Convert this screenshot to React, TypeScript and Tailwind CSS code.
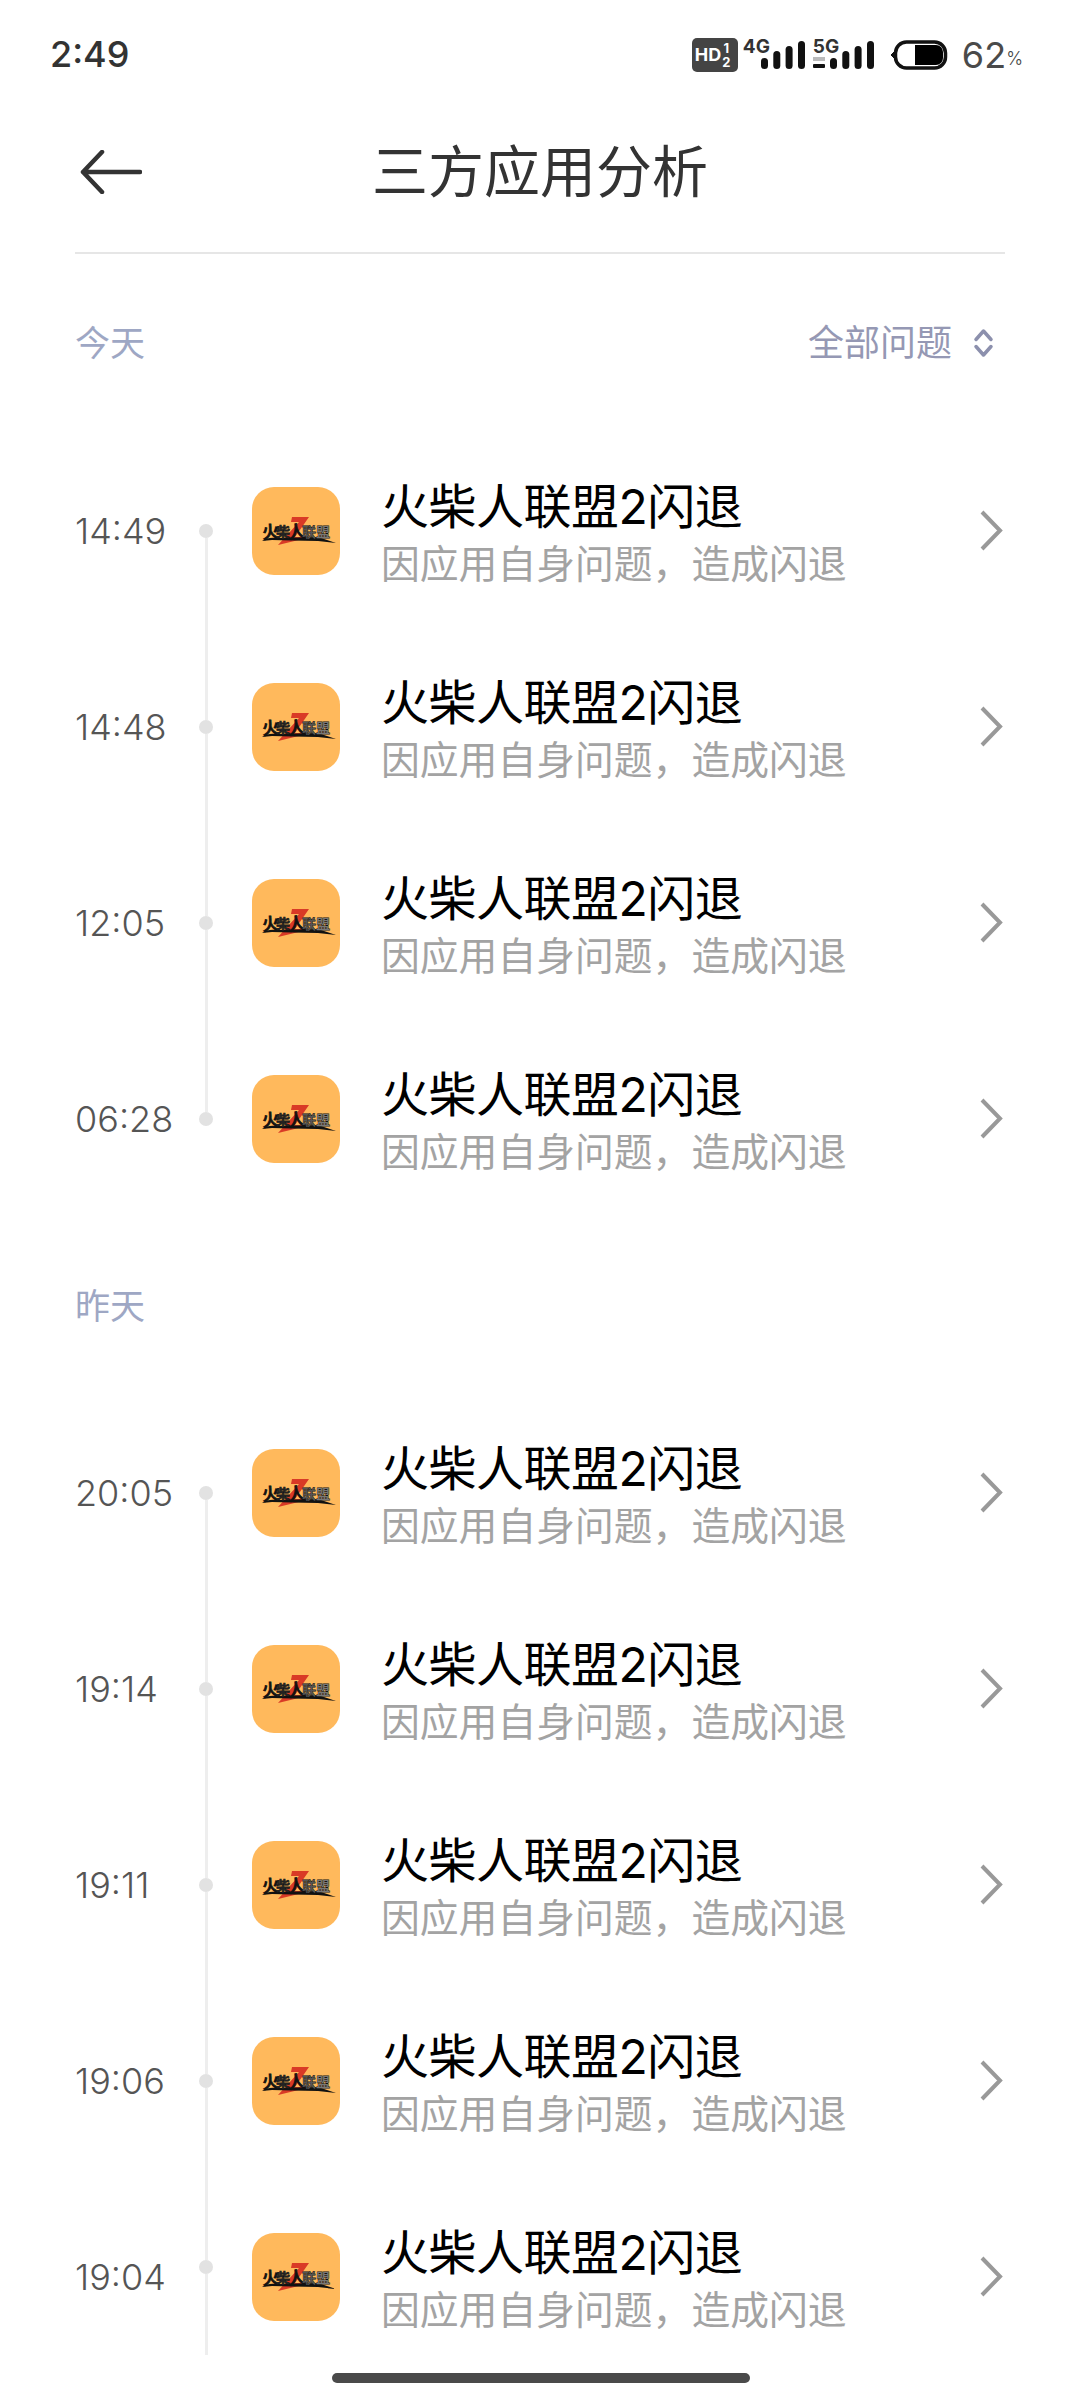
const CJK = "font-['Inter','Noto_Sans_CJK_SC',sans-serif]";

function Bars({ x }: { x: number }) {
  const bars = [
    [0, 11],
    [12.3, 18],
    [24.6, 23],
    [37, 28],
  ];
  return (
    <>
      {bars.map(([dx, h]) => (
        <rect key={dx} x={x + dx} y={31 - h} width={7} height={h} rx={3.5} fill="#111" />
      ))}
    </>
  );
}

function StatusIcons() {
  return (
    <div className="flex items-center">
      <div className="flex h-[34px] w-[46px] items-center rounded-[5px] bg-[#444] pl-[3px] text-[18px] font-bold leading-none text-white">
        <span>HD</span>
        <span className="ml-[1px] flex flex-col items-center text-[13px] leading-[14px]">
          <span>1</span>
          <span>2</span>
        </span>
      </div>
      <div className="relative ml-[5px] h-[34px] w-[140px]">
        <span className="absolute left-0 top-[-1px] text-[19px] font-bold leading-[20px] text-[#333]">4G</span>
        <span className="absolute left-[70px] top-[-1px] text-[19px] font-bold leading-[20px] text-[#333]">5G</span>
        <svg width="140" height="34" viewBox="0 0 140 34" className="block">
          <Bars x={18} />
          <rect x="70" y="19" width="12" height="4" fill="#bbb" />
          <rect x="70" y="26" width="12" height="4" rx="1" fill="#111" />
          <Bars x={87} />
        </svg>
      </div>
      <svg width="58" height="30" viewBox="0 0 58 30" className="ml-[7px] block">
        <path d="M1 15 L5 11 L5 19 Z" fill="#111" stroke="#111" strokeWidth="1" />
        <rect x="5.5" y="2" width="50" height="26" rx="11" fill="none" stroke="#111" strokeWidth="3.5" />
        <path d="M25 5 H46 A7 7 0 0 1 53 12 V18 A7 7 0 0 1 46 25 H25 Z" fill="#000" />
      </svg>
      <span className="ml-[14px] text-[36px] font-normal leading-none text-[#4a4a4a]">62</span>
      <span className="mt-[7px] text-[18px] font-light leading-none text-[#444]">%</span>
    </div>
  );
}

function GameIcon() {
  return (
    <svg width="88" height="88" viewBox="0 0 88 88" className="block shrink-0">
      <rect width="88" height="88" rx="22" fill="#FFB95C" />
      <path d="M40 30 H57 L43 50 H59 L26 58 L36 47 L47 35 H39 Z" fill="#D93A26" />
      <path d="M10 54 Q16 50 24 51 L66 50 L84 56 L66 54 L40 53.5 L20 53 Z" fill="#111" />
      <g style={{ fontFamily: "'Noto Sans CJK SC', sans-serif", fontWeight: 500 }} stroke="#111" strokeWidth="0.8" paintOrder="stroke">
        <text x="10" y="51" fontSize="17" fill="#111" transform="rotate(-5 18 44)">火</text>
        <text x="24" y="50" fontSize="14" fill="#222">柴</text>
        <text x="36" y="51" fontSize="17" fill="#111" transform="rotate(-6 44 44)">人</text>
        <text x="50" y="50" fontSize="14" fill="#555">联</text>
        <text x="64" y="50" fontSize="14" fill="#777">盟</text>
      </g>
    </svg>
  );
}

function Row({ time, top, bottom, last }: { time: string; top: boolean; bottom: boolean; last?: boolean }) {
  return (
    <div className="flex h-[196px] items-center pl-[75px] pr-[77px]">
      <span className="w-[124px] text-[36px] font-light leading-none text-[#555]">{time}</span>
      <div className="flex h-full w-[14px] flex-col items-center">
        <div className={top ? "w-[3px] flex-1 bg-[#eeeeee]" : "w-[3px] flex-1"} />
        <div className="h-[14px] w-[14px] rounded-full bg-[#e2e2e2]" />
        <div className={bottom ? (last ? "mb-[20px] w-[3px] flex-1 bg-[#eeeeee]" : "w-[3px] flex-1 bg-[#eeeeee]") : "w-[3px] flex-1"} />
      </div>
      <div className="ml-[39px]">
        <GameIcon />
      </div>
      <div className="ml-[41px] flex flex-1 flex-col">
        <span className="mt-[6px] h-[60px] text-[48px] leading-[60px] tracking-[-0.5px] text-black">火柴人联盟2闪退</span>
        <span className="mt-[-1px] h-[56px] text-[38.8px] leading-[56px] text-[#a3a3a3]">因应用自身问题，造成闪退</span>
      </div>
      <svg width="24" height="44" viewBox="0 0 24 44" className="block shrink-0" fill="none">
        <path d="M3 3 L21 21.5 L3 40" stroke="#999" strokeWidth="4" />
      </svg>
    </div>
  );
}

export default function App() {
  const today = ["14:49", "14:48", "12:05", "06:28"];
  const yesterday = ["20:05", "19:14", "19:11", "19:06", "19:04"];
  return (
    <div className={`relative h-[2400px] w-[1080px] overflow-hidden bg-white ${CJK}`}>
      <div className="flex h-[110px] items-center justify-between pl-[50px] pr-[57px]">
        <span className="mt-[-2px] text-[36px] font-medium leading-none text-[#333]">2:49</span>
        <StatusIcons />
      </div>

      <div className="relative flex h-[124px] items-center justify-center">
        <svg width="62" height="44" viewBox="0 0 62 44" className="absolute left-[80px] top-[40px]" fill="none">
          <path d="M60 22 H3 M22 2 L3 22 L22 42" stroke="#333" strokeWidth="4.5" strokeLinecap="round" strokeLinejoin="round" />
        </svg>
        <span className="text-[56px] leading-none text-[#333]">三方应用分析</span>
      </div>
      <div className="mx-[75px] mt-[18px] h-[2px] bg-[#e6e6e6]" />

      <div className="mt-[59px] flex h-[60px] items-center justify-between pl-[75px] pr-[85px]">
        <span className="text-[35px] text-[#9ea7c4]">今天</span>
        <div className="flex items-center text-[36px] text-[#9598b4]">
          <span>全部问题</span>
          <svg width="22" height="32" viewBox="0 0 22 32" className="ml-[21px] block" fill="none">
            <path d="M3 12.5 L10.5 4 L18 12.5 M3 19.5 L10.5 28 L18 19.5" stroke="#8c90ad" strokeWidth="3.5" strokeLinecap="round" strokeLinejoin="round" />
          </svg>
        </div>
      </div>

      <div className="mt-[60px]">
        {today.map((t, i) => (
          <Row key={t} time={t} top={i > 0} bottom={i < today.length - 1} />
        ))}
      </div>

      <div className="mt-[59px] flex h-[60px] items-center pl-[75px] text-[35px] text-[#9ea7c4]">昨天</div>

      <div className="mt-[59px]">
        {yesterday.map((t, i) => (
          <Row key={t} time={t} top={i > 0} bottom last={i === yesterday.length - 1} />
        ))}
      </div>

      <div className="absolute left-[332px] top-[2373px] h-[10px] w-[418px] rounded-full bg-[#4a4a4a]" />
    </div>
  );
}
